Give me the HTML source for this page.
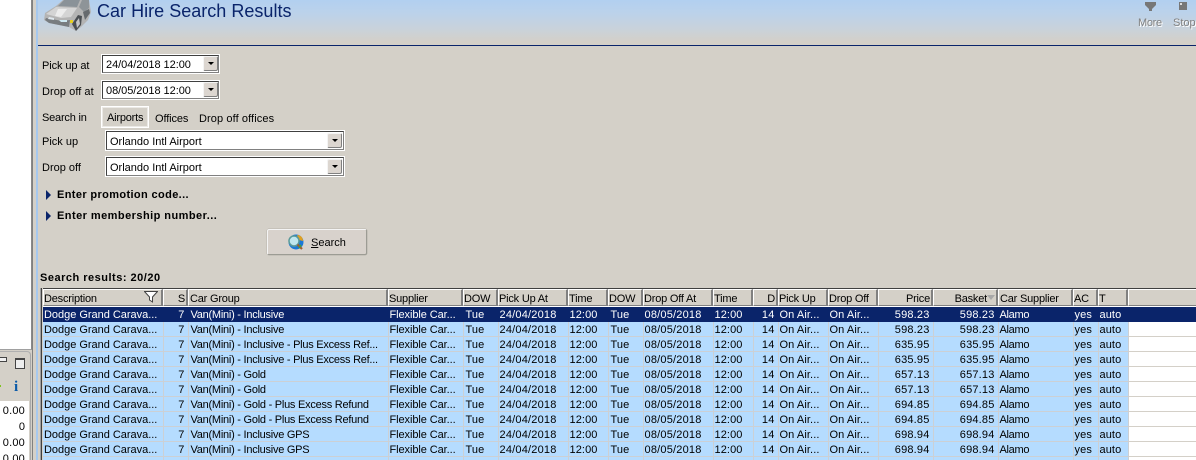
<!DOCTYPE html>
<html><head><meta charset="utf-8"><style>
html,body{margin:0;padding:0;width:1196px;height:460px;overflow:hidden;background:#d4d0c8}
body{font:11px "Liberation Sans",sans-serif;color:#000;position:relative;letter-spacing:0}
.a{position:absolute;white-space:nowrap}
.l{line-height:14px}
.fld{position:absolute;background:#fff;box-sizing:border-box;border:1px solid #808080;border-top-color:#404040;border-left-color:#404040;box-shadow:0 0 0 1px #fff;white-space:nowrap}
.btn{position:absolute;width:15px;height:15px;box-sizing:border-box;background:#dcd6d0;border:1px solid;border-color:#f4f4f4 #808080 #808080 #f4f4f4;border-radius:2px}
.btn:after{content:"";position:absolute;left:4px;top:5px;border:3px solid transparent;border-top:3px solid #000;border-bottom:0}
.arr{position:absolute;left:46px;width:0;height:0;border-left:5px solid #0a246a;border-top:5px solid transparent;border-bottom:5px solid transparent}
.b{font-weight:bold;letter-spacing:.45px}
#h{position:absolute;left:43px;top:289px;height:17px;width:1153px;letter-spacing:-.2px}
#h div{position:absolute;top:0;height:17px;box-sizing:border-box;background:#d4d0c8;border:1px solid;border-color:#fff #808080 #808080 #fff;border-right-width:2px;line-height:19px;padding-left:0;white-space:nowrap;overflow:hidden}
#h div.r{text-align:right;padding-right:1px}
table{position:absolute;left:43px;top:307px;border-collapse:collapse;table-layout:fixed;width:1153px}
td{height:12px;padding:2px 0 0 1px;border-right:1px solid #ccd0d4;border-bottom:1px solid #ccd0d4;background:#b5dcff;line-height:12px;white-space:nowrap;overflow:hidden;box-sizing:content-box;letter-spacing:.1px}
td:last-child{background:#fff;border-right:0;border-bottom-color:#d4d0c8}
td:nth-child(2),td:nth-child(11),td:nth-child(14),td:nth-child(15){text-align:right;padding-right:3px;padding-left:0;letter-spacing:.18px}
td:nth-child(1){letter-spacing:-.02px}
td:nth-child(3){padding-left:2px;letter-spacing:-.25px}
td:nth-child(4){letter-spacing:-.08px}
td:nth-child(5),td:nth-child(8){padding-left:2px}
td:nth-child(6),td:nth-child(9){letter-spacing:.2px}
td:nth-child(7),td:nth-child(10){letter-spacing:.1px}
td:nth-child(16){letter-spacing:-.3px}
tr.s td{background:#0a246a;color:#fff;border-color:#0a246a}
</style></head><body>

<!-- left pane -->
<div class="a" style="left:0;top:0;width:31px;height:349px;background:#fff;border-right:1px solid #8a8a8a;border-bottom:1px solid #a0a0a0"></div>
<div class="a" style="left:0;top:351px;width:30px;height:109px;background:#d4d0c8;border-right:1px solid #a8a8a8;border-top:1px solid #b0b0b0;border-top-right-radius:4px"></div>
<div class="a" style="left:0;top:357px;width:6px;height:3px;border:1px solid #444;border-left:0;background:#f0f0f0"></div>
<div class="a" style="left:15px;top:358px;width:8px;height:8px;border:1px solid #444;border-top-width:2px;background:#eee"></div>
<div class="a" style="left:0;top:385px;width:1px;height:2px;background:#7fc41c"></div>
<div class="a" style="left:14px;top:379px;font:bold 15px 'Liberation Serif',serif;color:#0a5aa8">i</div>
<div class="a" style="left:0;top:401px;width:29px;height:59px;background:#fff"></div>
<div class="a l" style="left:0;width:25px;text-align:right;top:404px;letter-spacing:.2px">0.00</div>
<div class="a l" style="left:0;width:25px;text-align:right;top:420px">0</div>
<div class="a l" style="left:0;width:25px;text-align:right;top:436px;letter-spacing:.2px">0.00</div>
<div class="a l" style="left:0;width:25px;text-align:right;top:452px;letter-spacing:.2px">0.00</div>

<!-- splitter -->
<div class="a" style="left:32px;top:0;width:3px;height:460px;background:#d4d0c8;border-left:1px solid #808080"></div>
<div class="a" style="left:36px;top:0;width:2px;height:460px;background:#a6c8ee"></div>

<!-- header band -->
<div class="a" style="left:38px;top:0;width:1158px;height:45px;background:linear-gradient(#b2d0f0 0,#bcd2ea 14px,#c8d2dc 28px,#d4d0c8 42px)"></div>
<div class="a" style="left:38px;top:45px;width:1158px;height:1px;background:#0a246a"></div>

<!-- car -->
<svg class="a" style="left:43px;top:0" width="50" height="32" viewBox="0 0 50 32">
<path d="M13 6 L20 0 H46 L48 12 L45 20 L38 27 L33 31 L26 27 L6 23 L1 20 L2 13 Z" fill="#b4b4b4"/>
<path d="M15 6 L21 0 H37 L34 7 Z" fill="#8a9298"/>
<path d="M36 7 L39 0 H46 L46 8 L41 12 Z" fill="#8e9498"/>
<path d="M3 14 L13 7 L34 8 L28 17 L18 18 Z" fill="#d4d4d4"/>
<path d="M15 9 L24 9 L18 17 L12 16 Z" fill="#ececec"/>
<path d="M3 18 L19 21 L27 20 L26 27 L6 23 L2 20 Z" fill="#787c80"/>
<path d="M6 17 L11 18 L11 20 L5 19 Z" fill="#dfe8ee"/>
<path d="M16 20 L24 20 L24 22 L18 22 Z" fill="#cfe8f2"/>
<rect x="27" y="20" width="3" height="3" fill="#e8d020"/>
<path d="M29 24 L35 15 L39 16 L38 25 L33 31 Z" fill="#4a4e52"/>
<path d="M33 22 L36 18 L37 24 L34 28 Z" fill="#c4c4c4"/>
<path d="M40 12 L46 9 L47 13 L42 20 Z" fill="#666a6e"/>
</svg>

<div class="a" style="left:97px;top:0;font-size:18px;line-height:22px;color:#0a246a;letter-spacing:.02px">Car Hire Search Results</div>

<!-- More / Stop -->
<svg class="a" style="left:1145px;top:2px" width="11" height="10"><path d="M0 0H11V3L7 7V9H4V7L0 3Z" fill="#777"/></svg>
<div class="a" style="left:1179px;top:2px;width:8px;height:8px;background:#777"><div style="width:2px;height:2px;margin:1px;background:#ddd"></div></div>
<div class="a l" style="left:1138px;top:16px;color:#808080;text-shadow:1px 1px 0 #fff;letter-spacing:-.3px">More</div>
<div class="a l" style="left:1173px;top:16px;color:#808080;text-shadow:1px 1px 0 #fff">Stop</div>

<!-- form -->
<div class="a l" style="left:42px;top:59px;letter-spacing:-.1px">Pick up at</div>
<div class="fld" style="left:102px;top:55px;width:117px;height:18px;padding-left:3px;line-height:18px;letter-spacing:-.05px">24/04/2018 12:00</div>
<div class="btn" style="left:203px;top:56px"></div>
<div class="a l" style="left:42px;top:85px;letter-spacing:.05px">Drop off at</div>
<div class="fld" style="left:102px;top:81px;width:117px;height:18px;padding-left:3px;line-height:18px;letter-spacing:-.05px">08/05/2018 12:00</div>
<div class="btn" style="left:203px;top:82px"></div>

<div class="a l" style="left:42px;top:111px;letter-spacing:-.2px">Search in</div>
<div class="a" style="left:101px;top:106px;width:48px;height:22px;box-sizing:border-box;background:#d4d0c8;border:1px solid #fff;box-shadow:inset 0 0 0 1px #ebe9e5;line-height:23px;padding-left:5px;letter-spacing:-.2px">Airports</div>
<div class="a l" style="left:155px;top:112px;letter-spacing:-.1px">Offices</div>
<div class="a l" style="left:199px;top:112px;letter-spacing:.1px">Drop off offices</div>

<div class="a l" style="left:42px;top:135px">Pick up</div>
<div class="fld" style="left:106px;top:131px;width:238px;height:19px;padding-left:3px;line-height:21px;letter-spacing:0">Orlando Intl Airport</div>
<div class="btn" style="left:327px;top:133px"></div>
<div class="a l" style="left:42px;top:161px">Drop off</div>
<div class="fld" style="left:106px;top:157px;width:238px;height:19px;padding-left:3px;line-height:21px;letter-spacing:0">Orlando Intl Airport</div>
<div class="btn" style="left:327px;top:159px"></div>

<div class="arr" style="top:190px"></div>
<div class="a l b" style="left:57px;top:188px;letter-spacing:.37px">Enter promotion code...</div>
<div class="arr" style="top:211px"></div>
<div class="a l b" style="left:57px;top:209px">Enter membership number...</div>

<div class="a" style="left:267px;top:229px;width:100px;height:26px;box-sizing:border-box;background:#d8d2cc;border:1px solid #9c9c94;border-top-color:#f4f4f4;border-left-color:#f4f4f4;box-shadow:0 0 0 .5px #b8b4ac;border-radius:2px"></div>
<svg class="a" style="left:287px;top:234px" width="18" height="17" viewBox="0 0 18 17">
<circle cx="9" cy="8" r="7.5" fill="#1a78d8"/>
<path d="M10 1 C14 1 16 4 16 7 L12 6 Z" fill="#e0a020"/>
<circle cx="7" cy="7" r="5" fill="#bfe6ee" stroke="#5a9a9a" stroke-width="1.5"/>
<path d="M10.5 10.5 L15 15" stroke="#a06030" stroke-width="2.2"/>
<path d="M12 14 L14 11" stroke="#40a040" stroke-width="1.5"/>
</svg>
<div class="a l" style="left:311px;top:236px"><u>S</u>earch</div>

<div class="a l b" style="left:40px;top:271px;letter-spacing:.5px">Search results: 20/20</div>

<!-- grid frame -->
<div class="a" style="left:41px;top:288px;width:1155px;height:172px;background:#fff;border-top:1px solid #404040"></div>
<div class="a" style="left:40px;top:288px;width:1px;height:172px;background:#a0a0a0"></div>
<div class="a" style="left:41px;top:288px;width:2px;height:172px;background:#d4d0c8;border-left:1px solid #404040;box-sizing:border-box"></div>

<div id="h">
<div style="left:0;width:120px">Description<svg style="position:absolute;right:3px;top:1px" width="14" height="12"><path d="M.5 .5H13.5L8.5 6V11L5.5 9V6Z" fill="#fff" stroke="#444"/></svg></div>
<div class="r" style="left:120px;width:25px">S</div>
<div style="left:145px;width:200px;padding-left:1px">Car Group</div>
<div style="left:345px;width:75px">Supplier</div>
<div style="left:420px;width:35px">DOW</div>
<div style="left:455px;width:70px">Pick Up At</div>
<div style="left:525px;width:40px">Time</div>
<div style="left:565px;width:35px">DOW</div>
<div style="left:600px;width:70px">Drop Off At</div>
<div style="left:670px;width:40px">Time</div>
<div class="r" style="left:710px;width:25px">D</div>
<div style="left:735px;width:50px">Pick Up</div>
<div style="left:785px;width:50px">Drop Off</div>
<div class="r" style="left:835px;width:55px">Price</div>
<div class="r" style="left:890px;width:65px;padding-right:9px">Basket<svg style="position:absolute;right:1px;top:5px" width="8" height="5"><path d="M0 0H8L4 5Z" fill="#a8a8a8"/></svg></div>
<div style="left:955px;width:75px;padding-left:1px">Car Supplier</div>
<div style="left:1030px;width:25px">AC</div>
<div style="left:1055px;width:30px">T</div>
<div style="left:1085px;width:68px;border-right:0"></div>
</div>

<table>
<colgroup><col style="width:120px"><col style="width:25px"><col style="width:200px"><col style="width:75px"><col style="width:35px"><col style="width:70px"><col style="width:40px"><col style="width:35px"><col style="width:70px"><col style="width:40px"><col style="width:25px"><col style="width:50px"><col style="width:50px"><col style="width:55px"><col style="width:65px"><col style="width:75px"><col style="width:25px"><col style="width:30px"><col style="width:68px"></colgroup>
<tr class="s"><td>Dodge Grand Carava...</td><td>7</td><td>Van(Mini) - Inclusive</td><td>Flexible Car...</td><td>Tue</td><td>24/04/2018</td><td>12:00</td><td>Tue</td><td>08/05/2018</td><td>12:00</td><td>14</td><td>On Air...</td><td>On Air...</td><td>598.23</td><td>598.23</td><td>Alamo</td><td>yes</td><td>auto</td><td></td></tr>
<tr><td>Dodge Grand Carava...</td><td>7</td><td>Van(Mini) - Inclusive</td><td>Flexible Car...</td><td>Tue</td><td>24/04/2018</td><td>12:00</td><td>Tue</td><td>08/05/2018</td><td>12:00</td><td>14</td><td>On Air...</td><td>On Air...</td><td>598.23</td><td>598.23</td><td>Alamo</td><td>yes</td><td>auto</td><td></td></tr>
<tr><td>Dodge Grand Carava...</td><td>7</td><td>Van(Mini) - Inclusive - Plus Excess Ref...</td><td>Flexible Car...</td><td>Tue</td><td>24/04/2018</td><td>12:00</td><td>Tue</td><td>08/05/2018</td><td>12:00</td><td>14</td><td>On Air...</td><td>On Air...</td><td>635.95</td><td>635.95</td><td>Alamo</td><td>yes</td><td>auto</td><td></td></tr>
<tr><td>Dodge Grand Carava...</td><td>7</td><td>Van(Mini) - Inclusive - Plus Excess Ref...</td><td>Flexible Car...</td><td>Tue</td><td>24/04/2018</td><td>12:00</td><td>Tue</td><td>08/05/2018</td><td>12:00</td><td>14</td><td>On Air...</td><td>On Air...</td><td>635.95</td><td>635.95</td><td>Alamo</td><td>yes</td><td>auto</td><td></td></tr>
<tr><td>Dodge Grand Carava...</td><td>7</td><td>Van(Mini) - Gold</td><td>Flexible Car...</td><td>Tue</td><td>24/04/2018</td><td>12:00</td><td>Tue</td><td>08/05/2018</td><td>12:00</td><td>14</td><td>On Air...</td><td>On Air...</td><td>657.13</td><td>657.13</td><td>Alamo</td><td>yes</td><td>auto</td><td></td></tr>
<tr><td>Dodge Grand Carava...</td><td>7</td><td>Van(Mini) - Gold</td><td>Flexible Car...</td><td>Tue</td><td>24/04/2018</td><td>12:00</td><td>Tue</td><td>08/05/2018</td><td>12:00</td><td>14</td><td>On Air...</td><td>On Air...</td><td>657.13</td><td>657.13</td><td>Alamo</td><td>yes</td><td>auto</td><td></td></tr>
<tr><td>Dodge Grand Carava...</td><td>7</td><td>Van(Mini) - Gold - Plus Excess Refund</td><td>Flexible Car...</td><td>Tue</td><td>24/04/2018</td><td>12:00</td><td>Tue</td><td>08/05/2018</td><td>12:00</td><td>14</td><td>On Air...</td><td>On Air...</td><td>694.85</td><td>694.85</td><td>Alamo</td><td>yes</td><td>auto</td><td></td></tr>
<tr><td>Dodge Grand Carava...</td><td>7</td><td>Van(Mini) - Gold - Plus Excess Refund</td><td>Flexible Car...</td><td>Tue</td><td>24/04/2018</td><td>12:00</td><td>Tue</td><td>08/05/2018</td><td>12:00</td><td>14</td><td>On Air...</td><td>On Air...</td><td>694.85</td><td>694.85</td><td>Alamo</td><td>yes</td><td>auto</td><td></td></tr>
<tr><td>Dodge Grand Carava...</td><td>7</td><td>Van(Mini) - Inclusive GPS</td><td>Flexible Car...</td><td>Tue</td><td>24/04/2018</td><td>12:00</td><td>Tue</td><td>08/05/2018</td><td>12:00</td><td>14</td><td>On Air...</td><td>On Air...</td><td>698.94</td><td>698.94</td><td>Alamo</td><td>yes</td><td>auto</td><td></td></tr>
<tr><td>Dodge Grand Carava...</td><td>7</td><td>Van(Mini) - Inclusive GPS</td><td>Flexible Car...</td><td>Tue</td><td>24/04/2018</td><td>12:00</td><td>Tue</td><td>08/05/2018</td><td>12:00</td><td>14</td><td>On Air...</td><td>On Air...</td><td>698.94</td><td>698.94</td><td>Alamo</td><td>yes</td><td>auto</td><td></td></tr>
<tr><td>Dodge Grand Carava...</td><td>7</td><td>Van(Mini) - Inclusive GPS - Plus Excess...</td><td>Flexible Car...</td><td>Tue</td><td>24/04/2018</td><td>12:00</td><td>Tue</td><td>08/05/2018</td><td>12:00</td><td>14</td><td>On Air...</td><td>On Air...</td><td>736.66</td><td>736.66</td><td>Alamo</td><td>yes</td><td>auto</td><td></td></tr>
</table>
</body></html>
